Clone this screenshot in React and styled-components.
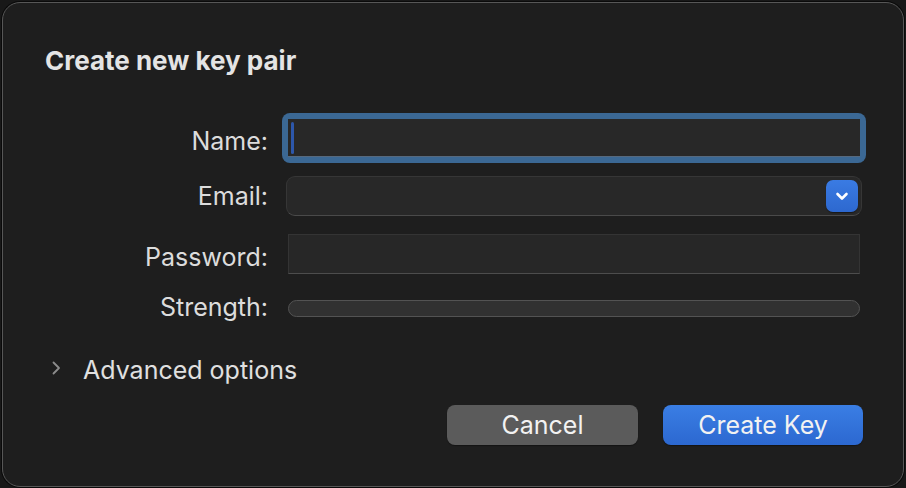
import React from "react";
import styled, { createGlobalStyle } from "styled-components";

const GlobalStyle = createGlobalStyle`
  html, body {
    margin: 0;
    padding: 0;
    background: #181818;
  }
  body {
    font-family: Inter, "Noto Sans", "Liberation Sans", sans-serif;
    -webkit-font-smoothing: antialiased;
  }
`;

const ChevronDown = () => (
  <svg width="16" height="16" viewBox="0 0 16 16" fill="none">
    <path d="M3.5 6 L8 10.5 L12.5 6" stroke="#fff" strokeWidth="2.6" strokeLinecap="round" strokeLinejoin="round" />
  </svg>
);

const ChevronRight = () => (
  <svg width="16" height="16" viewBox="0 0 16 16" fill="none">
    <path d="M4.5 2.5 L10 8 L4.5 13.5" stroke="#8c8c8c" strokeWidth="1.8" strokeLinecap="round" strokeLinejoin="round" />
  </svg>
);

const App = () => {
  return (
    <>
      <GlobalStyle />
      <Window>
        <Title>Create new key pair</Title>

        <Form>
          <Row $top={43}>
            <Label $dy={7}>Name:</Label>
            <FocusRing>
              <TextField>
                <Caret />
              </TextField>
            </FocusRing>
          </Row>

          <Row $top={19}>
            <Label $dy={5}>Email:</Label>
            <PopUp>
              <PopUpArrow>
                <ChevronDown />
              </PopUpArrow>
            </PopUp>
          </Row>

          <Row $top={18}>
            <Label $dy={8}>Password:</Label>
            <PlainField />
          </Row>

          <Row $top={26}>
            <Label $dy={-8}>Strength:</Label>
            <StrengthBar />
          </Row>
        </Form>

        <Disclosure>
          <DisclosureIcon>
            <ChevronRight />
          </DisclosureIcon>
          <DisclosureText>Advanced options</DisclosureText>
        </Disclosure>

        <ButtonRow>
          <Button>Cancel</Button>
          <Button $primary>Create Key</Button>
        </ButtonRow>
      </Window>
    </>
  );
};

export default App;

//css Window
const Window = styled.div`
  box-sizing: border-box;
  margin: 2px;
  width: 902px;
  height: 485px;
  border: 1px solid #575757;
  border-radius: 18px;
  box-shadow: 0 0 0 1px #0a0a0a;
  background: #1e1e1e;
  padding: 43px 40px 0 0;
  display: flex;
  flex-direction: column;
  color: #dedede;
`;

const Title = styled.div`
  padding-left: 42px;
  font-size: 26px;
  line-height: 30px;
  font-weight: 700;
  color: #e4e4e4;
`;

//css Form
const Form = styled.div`
  display: flex;
  flex-direction: column;
`;

const Row = styled.div`
  display: grid;
  grid-template-columns: 265px 572px;
  column-gap: 20px;
  align-items: start;
  margin-top: ${(p) => p.$top}px;
`;

const Label = styled.div`
  margin-top: ${(p) => p.$dy}px;
  text-align: right;
  font-size: 25px;
  line-height: 30px;
  color: #dcdcdc;
`;

//css Inputs
const FocusRing = styled.div`
  margin: -6px;
  padding: 6px;
  border-radius: 8px;
  background: #3b6894;
`;

const TextField = styled.div`
  box-sizing: border-box;
  height: 38px;
  background: #282828;
  border-bottom: 1px solid #56697e;
  display: flex;
  align-items: center;
  padding-left: 3px;
`;

const Caret = styled.span`
  width: 3px;
  height: 32px;
  border-radius: 2px;
  background: #2d57aa;
`;

const PopUp = styled.div`
  box-sizing: border-box;
  margin: 0 -2px;
  height: 40px;
  border-radius: 9px;
  background: #282828;
  border: 1px solid #363636;
  border-bottom-color: #4a4a4a;
  display: flex;
  justify-content: flex-end;
  align-items: center;
  padding-right: 3px;
`;

const PopUpArrow = styled.div`
  width: 32px;
  height: 32px;
  border-radius: 7px;
  background: linear-gradient(#3a7be3, #2d68cf);
  box-shadow: 0 1px 1px rgba(0, 0, 0, 0.4);
  display: flex;
  align-items: center;
  justify-content: center;
`;

const PlainField = styled.div`
  box-sizing: border-box;
  height: 40px;
  background: #272727;
  border: 1px solid #343434;
  border-bottom-color: #4d4d4d;
`;

const StrengthBar = styled.div`
  box-sizing: border-box;
  height: 17px;
  border-radius: 9px;
  background: #313131;
  border: 1.5px solid #535353;
`;

//css Disclosure
const Disclosure = styled.div`
  display: flex;
  align-items: center;
  margin-top: 33px;
  padding-left: 46px;
`;

const DisclosureIcon = styled.span`
  width: 16px;
  height: 16px;
  display: flex;
  margin-right: 18px;
  margin-bottom: 4px;
`;

const DisclosureText = styled.span`
  font-size: 25px;
  line-height: 30px;
  color: #e0e0e0;
`;

//css Buttons
const ButtonRow = styled.div`
  display: flex;
  justify-content: flex-end;
  gap: 25px;
  margin-top: 20px;
`;

const Button = styled.div`
  box-sizing: border-box;
  width: ${(p) => (p.$primary ? 200 : 191)}px;
  height: 40px;
  border-radius: 8px;
  display: flex;
  align-items: center;
  justify-content: center;
  font-size: 25px;
  color: #f2f2f2;
  background: ${(p) =>
    p.$primary ? "linear-gradient(#3a7ee4, #2c68d0)" : "#5b5b5b"};
  box-shadow: 0 1px 1px rgba(0, 0, 0, 0.35);
`;
